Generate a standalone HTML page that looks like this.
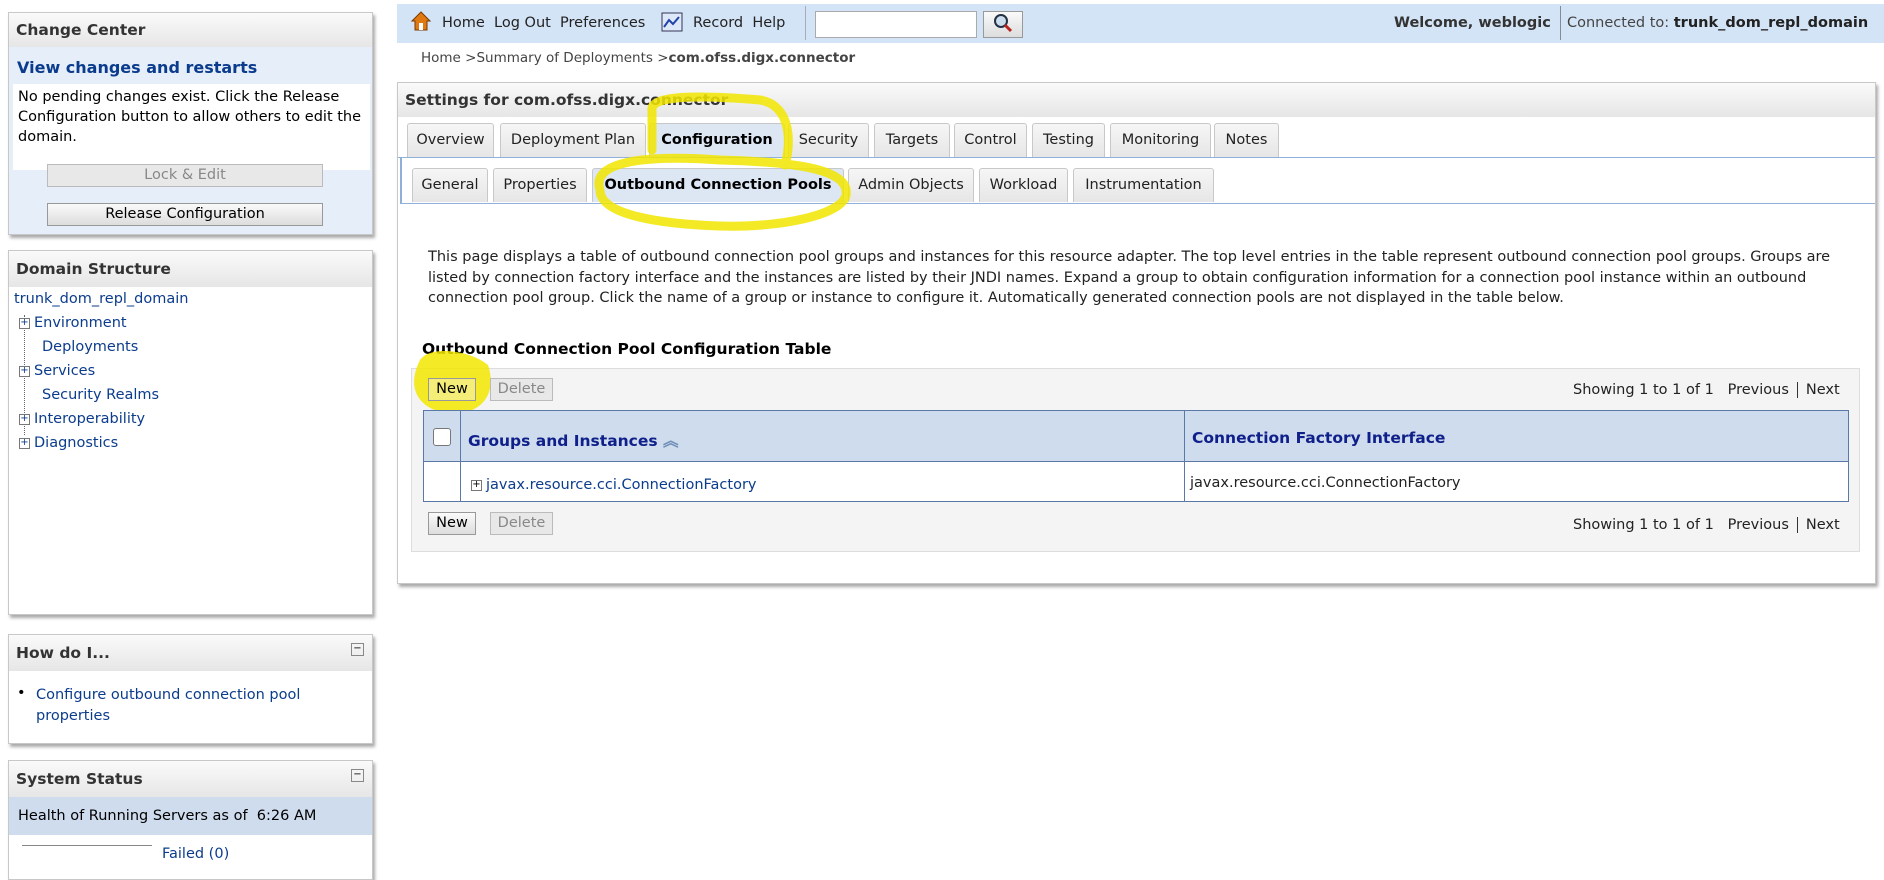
<!DOCTYPE html>
<html><head><meta charset="utf-8"><style>
*{box-sizing:border-box;margin:0;padding:0}
body{width:1884px;height:859px;overflow:hidden;background:#fff;font-family:"DejaVu Sans","Liberation Sans",sans-serif;font-size:14.5px;color:#000;position:relative}
.a{position:absolute;white-space:nowrap}
.box{position:absolute;border:1px solid #c8c8c8;box-shadow:2px 3px 3px #aaa;background:#fff}
.hd{position:absolute;left:0;right:0;top:0;background:linear-gradient(#fafafa,#e6e6e6);font-weight:bold;color:#333;padding-left:7px}
a,.lk{color:#0c3c8c;text-decoration:none}
.tab{position:absolute;height:34px;border:1px solid #c8c8c8;border-bottom:none;border-radius:3px 3px 0 0;background:linear-gradient(#f6f6f6,#e6e6e6);text-align:center;line-height:32px;color:#222;font-size:14.5px}
.btn{position:absolute;height:23px;border:1px solid #999;background:linear-gradient(#fafafa,#ddd);text-align:center;line-height:21px;font-size:14.5px}
.dis{color:#888;border-color:#bbb;background:#e8e8e8}
.pl{display:inline-block;width:11px;height:11px;border:1px solid #777;font-size:10px;line-height:8px;text-align:center;vertical-align:middle;margin-right:4px;background:#fff}
</style></head><body>

<div class="box" style="left:8px;top:12px;width:365px;height:223px;background:#e6eefa">
<div class="hd" style="height:34px;line-height:34px;font-size:15.5px">Change Center</div>
<div class="a" style="left:8px;top:45px;font-weight:bold;color:#0a3b8c;font-size:16px">View changes and restarts</div>
<div style="position:absolute;left:4px;top:71px;width:357px;height:86px;background:#fff;padding:3px 5px;line-height:20px;font-size:14.5px">No pending changes exist. Click the Release Configuration button to allow others to edit the domain.</div>
<div class="btn dis" style="left:38px;top:151px;width:276px">Lock &amp; Edit</div>
<div class="btn" style="left:38px;top:190px;width:276px">Release Configuration</div>
</div>

<div class="box" style="left:8px;top:250px;width:365px;height:365px">
<div class="hd" style="height:36px;line-height:36px;font-size:15.5px">Domain Structure</div>
<div class="a lk" style="left:5px;top:40px">trunk_dom_repl_domain</div>
<div style="position:absolute;left:15px;top:64px;height:120px;border-left:1px dotted #666"></div>
<div class="a lk" style="left:10px;top:64px"><span class="pl">+</span>Environment</div>
<div class="a lk" style="left:33px;top:88px">Deployments</div>
<div class="a lk" style="left:10px;top:112px"><span class="pl">+</span>Services</div>
<div class="a lk" style="left:33px;top:136px">Security Realms</div>
<div class="a lk" style="left:10px;top:160px"><span class="pl">+</span>Interoperability</div>
<div class="a lk" style="left:10px;top:184px"><span class="pl">+</span>Diagnostics</div>
</div>

<div class="box" style="left:8px;top:634px;width:365px;height:110px">
<div class="hd" style="height:36px;line-height:36px;font-size:15.5px">How do I...</div>
<div class="a" style="right:8px;top:8px;width:13px;height:13px;border:1px solid #888;font-size:10px;line-height:10px;text-align:center">−</div>
<div class="a" style="left:8px;top:50px">•</div>
<div class="a lk" style="left:27px;top:50px;line-height:21px">Configure outbound connection pool<br>properties</div>
</div>

<div class="box" style="left:8px;top:760px;width:365px;height:120px">
<div class="hd" style="height:36px;line-height:36px;font-size:15.5px">System Status</div>
<div class="a" style="right:8px;top:8px;width:13px;height:13px;border:1px solid #888;font-size:10px;line-height:10px;text-align:center">−</div>
<div style="position:absolute;left:0;right:0;top:36px;height:38px;background:#cfdcee;line-height:38px;padding-left:9px">Health of Running Servers as of &nbsp;6:26 AM</div>
<div style="position:absolute;left:13px;top:84px;width:130px;border-top:1px solid #888"></div>
<div class="a lk" style="left:153px;top:85px">Failed (0)</div>
</div>

<div style="position:absolute;left:397px;top:4px;width:1487px;height:39px;background:#d4e4f7"></div>
<svg class="a" style="left:410px;top:10px" width="22" height="22" viewBox="0 0 22 22"><path d="M2 11 L11 2 L20 11 L17 11 L17 20 L5 20 L5 11Z" fill="#e07a10" stroke="#7a3a00"/><rect x="9" y="13" width="4" height="7" fill="#fff"/></svg>
<div class="a" style="left:442px;top:15px;color:#222">Home&nbsp;&nbsp;Log Out&nbsp;&nbsp;Preferences</div>
<svg class="a" style="left:661px;top:12px" width="22" height="20"><rect x="1" y="1" width="20" height="18" fill="#dde8f8" stroke="#335"/><path d="M3 15 L8 8 L12 12 L18 5" stroke="#24a" stroke-width="2" fill="none"/></svg>
<div class="a" style="left:693px;top:15px;color:#222">Record&nbsp;&nbsp;Help</div>
<div style="position:absolute;left:805px;top:6px;height:34px;border-left:1px solid #aab"></div>
<div style="position:absolute;left:815px;top:11px;width:162px;height:27px;background:#fff;border:1px solid #aaa"></div>
<div class="btn" style="left:983px;top:11px;width:40px;height:27px"><svg width="22" height="22" viewBox="0 0 22 22"><circle cx="9" cy="9" r="6" fill="#cde" stroke="#234" stroke-width="2"/><path d="M13 13 L19 19" stroke="#b22" stroke-width="3"/></svg></div>
<div class="a" style="left:1394px;top:15px;font-weight:bold;color:#333">Welcome, weblogic</div>
<div style="position:absolute;left:1560px;top:6px;height:34px;border-left:1px solid #889"></div>
<div class="a" style="left:1567px;top:15px;color:#444">Connected to: <b style="color:#222">trunk_dom_repl_domain</b></div>

<div class="a" style="left:421px;top:50px;font-size:13.5px;color:#444">Home &gt;Summary of Deployments &gt;<b>com.ofss.digx.connector</b></div>

<div class="box" style="left:397px;top:82px;width:1479px;height:502px">
<div class="hd" style="height:34px;line-height:34px;font-size:15.5px">Settings for com.ofss.digx.connector</div>
</div>
<div style="position:absolute;left:398px;top:157px;width:1477px;border-top:1px solid #8fb0d8"></div>
<div class="tab" style="left:407px;top:123px;width:87px">Overview</div>
<div class="tab" style="left:500px;top:123px;width:146px">Deployment Plan</div>
<div class="tab" style="left:649px;top:123px;width:136px;font-weight:bold;background:#dde7f4;color:#000">Configuration</div>
<div class="tab" style="left:788px;top:123px;width:81px">Security</div>
<div class="tab" style="left:874px;top:123px;width:76px">Targets</div>
<div class="tab" style="left:954px;top:123px;width:73px">Control</div>
<div class="tab" style="left:1032px;top:123px;width:73px">Testing</div>
<div class="tab" style="left:1110px;top:123px;width:101px">Monitoring</div>
<div class="tab" style="left:1214px;top:123px;width:65px">Notes</div>

<div style="position:absolute;left:400px;top:158px;width:2px;height:46px;background:#8fb0d8"></div>
<div style="position:absolute;left:400px;top:203px;width:1475px;border-top:1px solid #8fb0d8"></div>
<div class="tab" style="left:412px;top:168px;width:76px">General</div>
<div class="tab" style="left:493px;top:168px;width:94px">Properties</div>
<div class="tab" style="left:592px;top:168px;width:252px;font-weight:bold;background:#dde7f4;color:#000">Outbound Connection Pools</div>
<div class="tab" style="left:848px;top:168px;width:126px">Admin Objects</div>
<div class="tab" style="left:979px;top:168px;width:89px">Workload</div>
<div class="tab" style="left:1073px;top:168px;width:141px">Instrumentation</div>

<div class="a" style="left:428px;top:247px;line-height:20.5px;font-size:14.5px;color:#222">This page displays a table of outbound connection pool groups and instances for this resource adapter. The top level entries in the table represent outbound connection pool groups. Groups are<br>listed by connection factory interface and the instances are listed by their JNDI names. Expand a group to obtain configuration information for a connection pool instance within an outbound<br>connection pool group. Click the name of a group or instance to configure it. Automatically generated connection pools are not displayed in the table below.</div>

<div class="a" style="left:422px;top:340px;font-weight:bold;font-size:15.5px">Outbound Connection Pool Configuration Table</div>
<div style="position:absolute;left:411px;top:368px;width:1449px;height:184px;background:#f4f4f4;border:1px solid #ddd"></div>

<svg class="a" style="left:0;top:0" width="1884" height="859">
<path d="M420 360 C430 345 470 350 488 365 C498 395 480 415 450 414 C420 410 405 390 420 360Z" fill="#f2e600" opacity="0.85"/>
</svg>
<div class="btn" style="left:428px;top:378px;width:48px;background:rgba(245,245,245,0.4)">New</div>
<div class="btn dis" style="left:490px;top:378px;width:63px">Delete</div>
<div class="a" style="left:1573px;top:382px;color:#222">Showing 1 to 1 of 1 &nbsp;&nbsp;Previous<span style="border-left:1px solid #333;margin:0 8px"></span>Next</div>

<div style="position:absolute;left:423px;top:410px;width:1426px;height:92px;border:1px solid #5a78a8;background:#fff"></div>
<div style="position:absolute;left:424px;top:411px;width:1424px;height:51px;background:#cfdcee;border-bottom:1px solid #5a78a8"></div>
<div style="position:absolute;left:460px;top:411px;height:90px;border-left:1px solid #5a78a8"></div>
<div style="position:absolute;left:1184px;top:411px;height:90px;border-left:1px solid #5a78a8"></div>
<div class="a" style="left:433px;top:428px;width:18px;height:18px;border:1px solid #777;border-radius:3px;background:#fff"></div>
<div class="a" style="left:468px;top:429px;font-weight:bold;color:#10208a;font-size:15.5px">Groups and Instances <span style="color:#7090b8">︽</span></div>
<div class="a" style="left:1192px;top:429px;font-weight:bold;color:#10208a;font-size:15.5px">Connection Factory Interface</div>
<div class="a" style="left:471px;top:477px"><span class="pl">+</span><span class="lk">javax.resource.cci.ConnectionFactory</span></div>
<div class="a" style="left:1190px;top:475px;color:#222">javax.resource.cci.ConnectionFactory</div>

<div class="btn" style="left:428px;top:512px;width:48px">New</div>
<div class="btn dis" style="left:490px;top:512px;width:63px">Delete</div>
<div class="a" style="left:1573px;top:517px;color:#222">Showing 1 to 1 of 1 &nbsp;&nbsp;Previous<span style="border-left:1px solid #333;margin:0 8px"></span>Next</div>

<svg class="a" style="left:0;top:0;pointer-events:none" width="1884" height="859">
<g fill="none" stroke="#f2e600" stroke-width="9" stroke-linecap="round" opacity="0.85">
<path d="M652 110 C650 95 700 95 760 100 C790 105 792 140 785 165"/>
<path d="M652 110 L652 150"/>
<path d="M600 190 C590 160 650 155 720 160 C800 162 850 170 846 195 C842 215 780 228 720 226 C660 224 600 215 600 190Z"/>
</g>
</svg>
</body></html>
